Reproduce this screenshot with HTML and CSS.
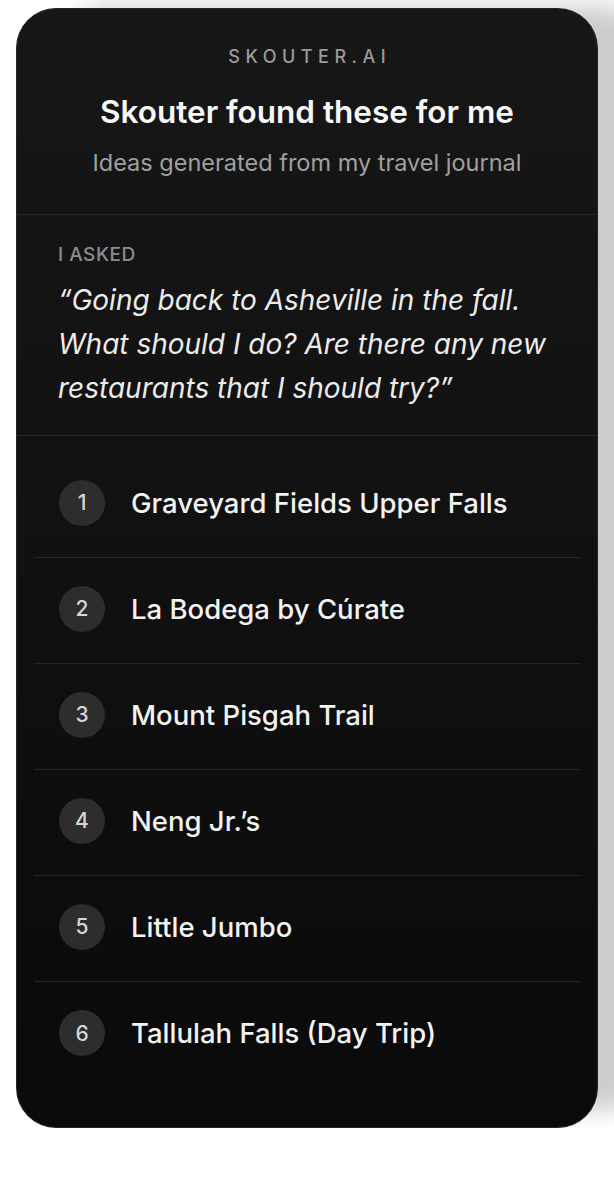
FILE: index.html
```html
<!DOCTYPE html>
<html>
<head>
    <title>Skouter found these for me</title>
    <link rel="stylesheet" href="styles.css">
</head>
<body>
    <div class="card">
        <div class="header">
            <div class="brand">SKOUTER.AI</div>
            <h1>Skouter found these for me</h1>
            <p class="sub">Ideas generated from my travel journal</p>
        </div>

        <div class="ask">
            <div class="label">I ASKED</div>
            <p class="quote">“Going back to Asheville in the fall. What should I do? Are there any new restaurants that I should try?”</p>
        </div>

        <ul class="ideas">
            <li><span class="num">1</span>Graveyard Fields Upper Falls</li>
            <li><span class="num">2</span>La Bodega by Cúrate</li>
            <li><span class="num">3</span>Mount Pisgah Trail</li>
            <li><span class="num">4</span>Neng Jr.’s</li>
            <li><span class="num">5</span>Little Jumbo</li>
            <li><span class="num">6</span>Tallulah Falls (Day Trip)</li>
        </ul>
    </div>
</body>
</html>
```

FILE: styles.css
```css
body {
    margin: 0;
    padding: 8px 0 0 16px;
    background: #fff;
    font-family: Inter, "Noto Sans", sans-serif;
}
.card {
    width: 582px;
    height: 1120px;
    box-sizing: border-box;
    border: 1px solid #262626;
    border-radius: 40px;
    background: linear-gradient(#171717, #0a0a0a);
    box-shadow: 50px -10px 24px -8px rgba(0,0,0,0.2);
    overflow: hidden;
}
.header {
    text-align: center;
    padding: 38px 20px 37px;
    border-bottom: 1px solid #292929;
}
.brand {
    font-size: 18px;
    line-height: 20px;
    font-weight: 500;
    letter-spacing: 5.5px;
    padding-left: 5.5px;
    color: #9b9b9b;
}
h1 {
    margin: 27px 0 0;
    font-size: 31.5px;
    line-height: 36px;
    font-weight: 600;
    color: #f7f7f7;
}
.sub {
    margin: 19px 0 0;
    font-size: 23.5px;
    line-height: 28px;
    font-weight: 400;
    color: #a0a0a0;
}
.ask {
    padding: 30px 30px 25px 41px;
    border-bottom: 1px solid #292929;
}
.label {
    font-size: 19px;
    line-height: 20px;
    font-weight: 500;
    letter-spacing: 0.5px;
    color: #8d8d8d;
}
.quote {
    margin: 13px 0 0;
    font-size: 28px;
    line-height: 44px;
    font-style: italic;
    color: #ececec;
}
.ideas {
    list-style: none;
    margin: 0 17px;
    padding: 16px 0 0;
}
.ideas li {
    box-sizing: border-box;
    display: flex;
    align-items: center;
    gap: 26px;
    height: 106px;
    padding: 0 0 4px 25px;
    border-bottom: 1px solid #262626;
    font-size: 27.5px;
    font-weight: 500;
    color: #f3f3f3;
}
.ideas li:last-child {
    border-bottom: none;
}
.num {
    flex: none;
    width: 46px;
    height: 46px;
    border-radius: 50%;
    background: #2d2d2d;
    color: #d6d6d6;
    font-size: 21px;
    font-weight: 500;
    display: flex;
    align-items: center;
    justify-content: center;
}
```
